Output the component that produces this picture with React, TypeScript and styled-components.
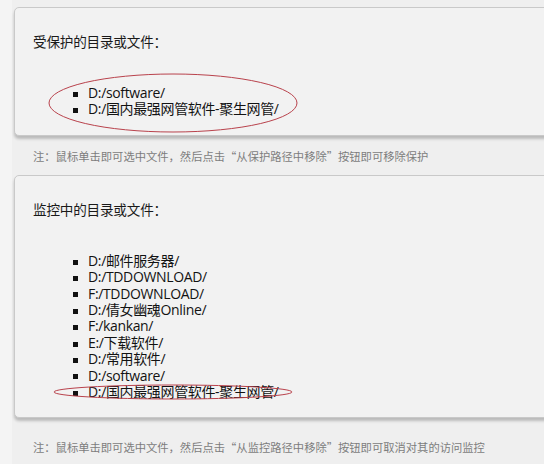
import React from "react";
import styled, { createGlobalStyle } from "styled-components";

const GlobalStyle = createGlobalStyle`
  html, body {
    margin: 0;
    padding: 0;
    background: #f4f4f4;
    overflow: hidden;
  }
  body {
    font-family: "Open Sans", "Noto Sans CJK SC", sans-serif;
  }
`;

const protectedPaths = ["D:/software/", "D:/国内最强网管软件-聚生网管/"];

const monitoredPaths = [
  "D:/邮件服务器/",
  "D:/TDDOWNLOAD/",
  "F:/TDDOWNLOAD/",
  "D:/倩女幽魂Online/",
  "F:/kankan/",
  "E:/下载软件/",
  "D:/常用软件/",
  "D:/software/",
  "D:/国内最强网管软件-聚生网管/",
];

const App = () => {
  return (
    <>
      <GlobalStyle />
      <Sheet>
        <Panel>
          <Title>受保护的目录或文件：</Title>
          <List>
            {protectedPaths.map((p) => (
              <Item key={p}>{p}</Item>
            ))}
            <Mark $left={15} $top={-12} $width={250} $height={60} />
          </List>
        </Panel>
        <Note $top={12}>注：鼠标单击即可选中文件，然后点击“从保护路径中移除”按钮即可移除保护</Note>

        <Panel>
          <Title>监控中的目录或文件：</Title>
          <List>
            {monitoredPaths.map((p, i) => (
              <Item key={p + i}>
                {p}
                {i === monitoredPaths.length - 1 && (
                  <Mark $left={-20} $top={0} $width={240} $height={16} />
                )}
              </Item>
            ))}
          </List>
        </Panel>
        <Note $top={21}>注：鼠标单击即可选中文件，然后点击“从监控路径中移除”按钮即可取消对其的访问监控</Note>
      </Sheet>
    </>
  );
};

export default App;

interface IMark {
  $left: number;
  $top: number;
  $width: number;
  $height: number;
}

const Mark = ({ $left, $top, $width, $height }: IMark) => (
  <MarkSvg
    $left={$left}
    $top={$top}
    width={$width}
    height={$height}
    viewBox={`0 0 ${$width} ${$height}`}
  >
    <ellipse
      cx={$width / 2}
      cy={$height / 2}
      rx={$width / 2 - 1}
      ry={$height / 2 - 1}
      fill="none"
      stroke="#b9424c"
      strokeWidth="1"
    />
  </MarkSvg>
);

const MarkSvg = styled.svg<{ $left: number; $top: number }>`
  position: absolute;
  left: ${(p) => p.$left}px;
  top: ${(p) => p.$top}px;
  pointer-events: none;
  overflow: visible;
`;

const Sheet = styled.div`
  margin-left: 12px;
  min-height: 464px;
  background: #efefef;
  padding: 7px 0 0 2px;
  box-sizing: border-box;
`;

const Panel = styled.section`
  width: 560px;
  box-sizing: border-box;
  background: #f2f2f2;
  border: 1px solid #c9c9c9;
  border-radius: 5px;
  box-shadow: 0 3px 3px rgba(0, 0, 0, 0.22);
  padding: 26px 0 17px 18px;
`;

const Title = styled.div`
  font-size: 13.6px;
  line-height: 16px;
  letter-spacing: -0.2px;
  color: #1a1a1a;
  margin-bottom: 35px;
`;

const List = styled.ul`
  position: relative;
  list-style: none;
  margin: 0;
  padding: 0 0 0 40px;
`;

const Item = styled.li`
  position: relative;
  display: flex;
  align-items: center;
  gap: 10px;
  font-size: 14px;
  line-height: 16.4px;
  letter-spacing: -0.35px;
  color: #121212;

  &::before {
    content: "";
    width: 5px;
    height: 5px;
    margin-top: 2px;
    background: #111;
    flex: none;
  }
`;

const Note = styled.p<{ $top: number }>`
  margin: 0;
  padding: ${(p) => p.$top}px 0 0 19px;
  height: ${(p) => p.$top + 27}px;
  box-sizing: border-box;
  font-size: 11.3px;
  line-height: 16px;
  color: #7d7d7d;
  font-family: "Noto Sans CJK SC", sans-serif;
`;
